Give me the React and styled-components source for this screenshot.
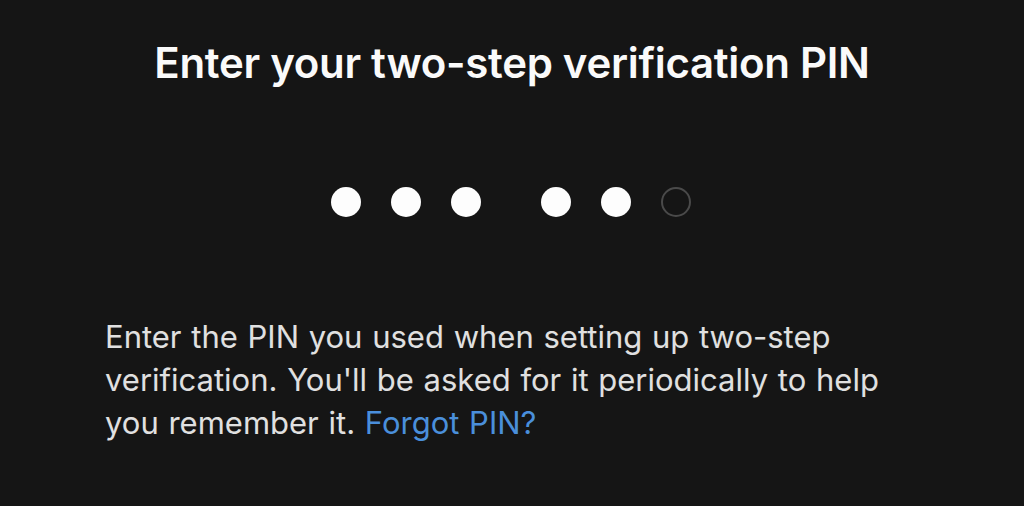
import React from 'react';
import styled, { createGlobalStyle } from 'styled-components';

const GlobalStyle = createGlobalStyle`
    html, body {
        margin: 0;
        padding: 0;
        background: #151515;
    }
    body {
        font-family: Inter, "Noto Sans", sans-serif;
        -webkit-font-smoothing: antialiased;
    }
`

const pin = [true, true, true, true, true, false];

function App() {
    return (
        <>
            <GlobalStyle />
            <Screen>
                <Title>Enter your two-step verification PIN</Title>
                <PinRow>
                    <DotGroup>
                        {pin.slice(0, 3).map((filled, i) => (
                            <Dot key={i} $filled={filled} />
                        ))}
                    </DotGroup>
                    <DotGroup>
                        {pin.slice(3).map((filled, i) => (
                            <Dot key={i} $filled={filled} />
                        ))}
                    </DotGroup>
                </PinRow>
                <Description>
                    Enter the PIN you used when setting up two-step verification.
                    You'll be asked for it periodically to help you remember it.{' '}
                    <Link href="##">Forgot PIN?</Link>
                </Description>
            </Screen>
        </>
    )
}

export default App

const Screen = styled.main`
    width: 1024px;
    height: 506px;
    box-sizing: border-box;
    background: #151515;
    display: flex;
    flex-direction: column;
    align-items: center;
    padding-top: 38px;
    overflow: hidden;
`
const Title = styled.h1`
    margin: 0;
    color: #fafafa;
    font-size: 42px;
    font-weight: 600;
    line-height: 50px;
    letter-spacing: -0.3px;
`
const PinRow = styled.div`
    display: flex;
    gap: 60px;
    margin-top: 99px;
    margin-left: -3px;
`
const DotGroup = styled.div`
    display: flex;
    gap: 30px;
`
const Dot = styled.span`
    width: 30px;
    height: 30px;
    box-sizing: border-box;
    border-radius: 50%;
    background: ${p => p.$filled ? '#fdfdfd' : 'transparent'};
    border: ${p => p.$filled ? 'none' : '2.5px solid #4a4a4a'};
`
const Description = styled.p`
    align-self: stretch;
    margin: 98px 0 0;
    padding: 0 120px 0 105px;
    color: #e0e0e0;
    font-size: 31px;
    line-height: 43px;
    font-weight: 400;
    word-spacing: 1px;
`
const Link = styled.a`
    color: #4a8fdb;
    text-decoration: none;
`
